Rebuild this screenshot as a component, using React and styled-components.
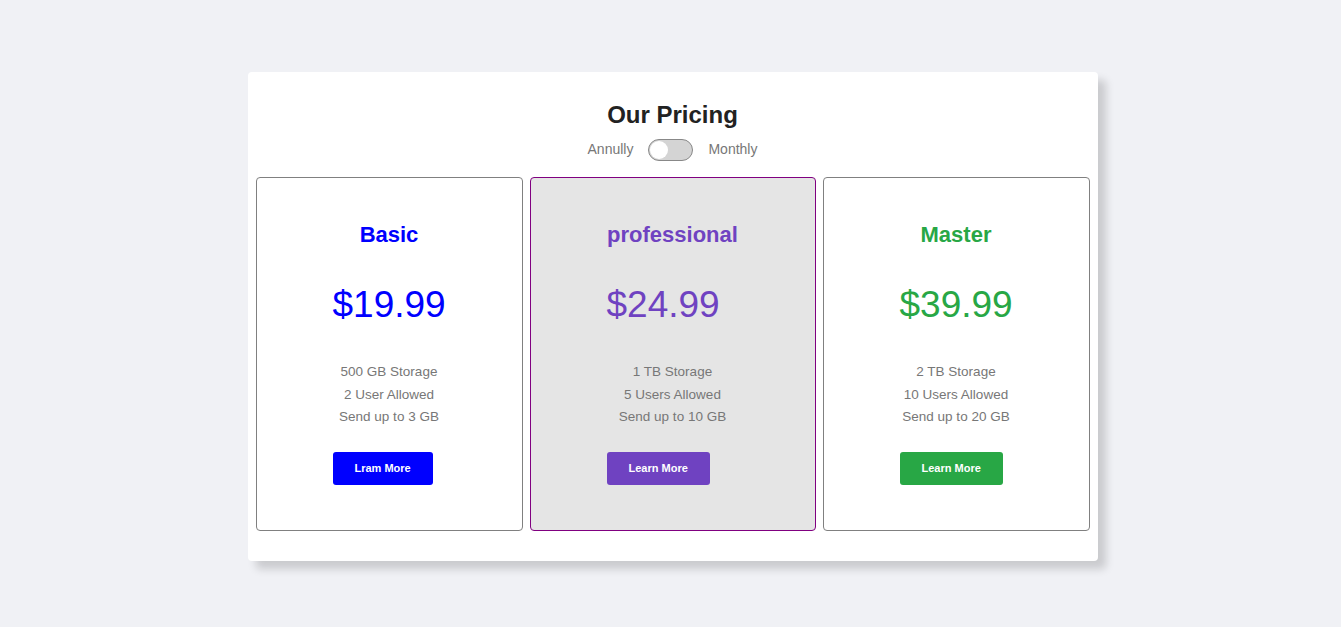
import React, { useState } from 'react';
import styled, { createGlobalStyle } from 'styled-components';

const GlobalStyle = createGlobalStyle`
    body {
        margin: 0;
        background-color: #f0f1f5;
        font-family: "Liberation Sans", Arial, sans-serif;
    }
`

const Page = styled.div`
    display: flex;
    justify-content: center;
    padding: 72px 0 0 4px;
    min-height: 627px;
    box-sizing: border-box;
`

const Panel = styled.div`
    width: 850px;
    background-color: #fff;
    border-radius: 4px;
    box-shadow: 8px 8px 8px rgba(0, 0, 0, 0.16);
    padding: 29px 8px 30px;
    box-sizing: border-box;
    display: flex;
    flex-direction: column;
    align-items: center;
    height: 489px;
`

const Title = styled.h1`
    margin: 0;
    font-size: 24px;
    line-height: 28px;
    font-weight: bold;
    color: #222;
`

const ToggleRow = styled.div`
    display: flex;
    align-items: center;
    gap: 15px;
    margin-top: 10px;
    height: 22px;
`

const ToggleLabel = styled.span`
    font-size: 14px;
    line-height: 18px;
    margin-top: -3px;
    color: #777;
`

const Switch = styled.button`
    position: relative;
    width: 45px;
    height: 22px;
    border: 1px solid #888;
    border-radius: 11px;
    background-color: ${p => (p.$on ? '#6f42c1' : '#d4d4d4')};
    padding: 0;
    cursor: pointer;

    &::after {
        content: '';
        position: absolute;
        top: 1px;
        left: ${p => (p.$on ? '24px' : '1px')};
        width: 18px;
        height: 18px;
        border-radius: 50%;
        background-color: #fff;
    }
`

const Cards = styled.div`
    display: grid;
    grid-template-columns: 267px 286px 267px;
    gap: 7px;
    margin-top: 16px;
    width: 100%;
`

const Card = styled.div`
    height: 354px;
    box-sizing: border-box;
    border: 1px solid ${p => (p.$featured ? '#800080' : '#808080')};
    border-radius: 4px;
    background-color: ${p => (p.$featured ? '#e5e5e5' : '#fff')};
    padding: 44px 76px 0;
    display: flex;
    flex-direction: column;
`

const PlanName = styled.h2`
    margin: 0;
    text-align: center;
    font-size: 22px;
    line-height: 26px;
    font-weight: bold;
    color: ${p => p.$color};
    white-space: nowrap;
`

const Price = styled.div`
    margin-top: 35px;
    font-size: 37px;
    line-height: 44px;
    color: ${p => p.$color};
    white-space: nowrap;
`

const Features = styled.ul`
    list-style: none;
    margin: 34px -40px 0;
    padding: 0;
    text-align: center;
    font-size: 13.5px;
    line-height: 22.5px;
    color: #777;
`

const LearnButton = styled.button`
    align-self: flex-start;
    margin-top: 23px;
    height: 33px;
    padding: 0 22px;
    border: none;
    border-radius: 3px;
    background-color: ${p => p.$color};
    color: #fff;
    font-family: "Liberation Sans", Arial, sans-serif;
    font-size: 11px;
    font-weight: bold;
    cursor: pointer;
`

const plans = [
    {
        name: 'Basic',
        price: '$19.99',
        color: '#0000ff',
        features: ['500 GB Storage', '2 User Allowed', 'Send up to 3 GB'],
        button: 'Lram More',
    },
    {
        name: 'professional',
        price: '$24.99',
        color: '#6f42c1',
        featured: true,
        features: ['1 TB Storage', '5 Users Allowed', 'Send up to 10 GB'],
        button: 'Learn More',
    },
    {
        name: 'Master',
        price: '$39.99',
        color: '#28a745',
        features: ['2 TB Storage', '10 Users Allowed', 'Send up to 20 GB'],
        button: 'Learn More',
    },
]

function App() {
    const [monthly, setMonthly] = useState(false);

    return (
        <Page>
            <GlobalStyle />
            <Panel>
                <Title>Our Pricing</Title>
                <ToggleRow>
                    <ToggleLabel>Annully</ToggleLabel>
                    <Switch $on={monthly} onClick={() => setMonthly(!monthly)} aria-label="toggle billing" />
                    <ToggleLabel>Monthly</ToggleLabel>
                </ToggleRow>
                <Cards>
                    {plans.map(plan => (
                        <Card key={plan.name} $featured={plan.featured}>
                            <PlanName $color={plan.color}>{plan.name}</PlanName>
                            <Price $color={plan.color}>{plan.price}</Price>
                            <Features>
                                {plan.features.map(f => <li key={f}>{f}</li>)}
                            </Features>
                            <LearnButton $color={plan.color}>{plan.button}</LearnButton>
                        </Card>
                    ))}
                </Cards>
            </Panel>
        </Page>
    )
}

export default App;
